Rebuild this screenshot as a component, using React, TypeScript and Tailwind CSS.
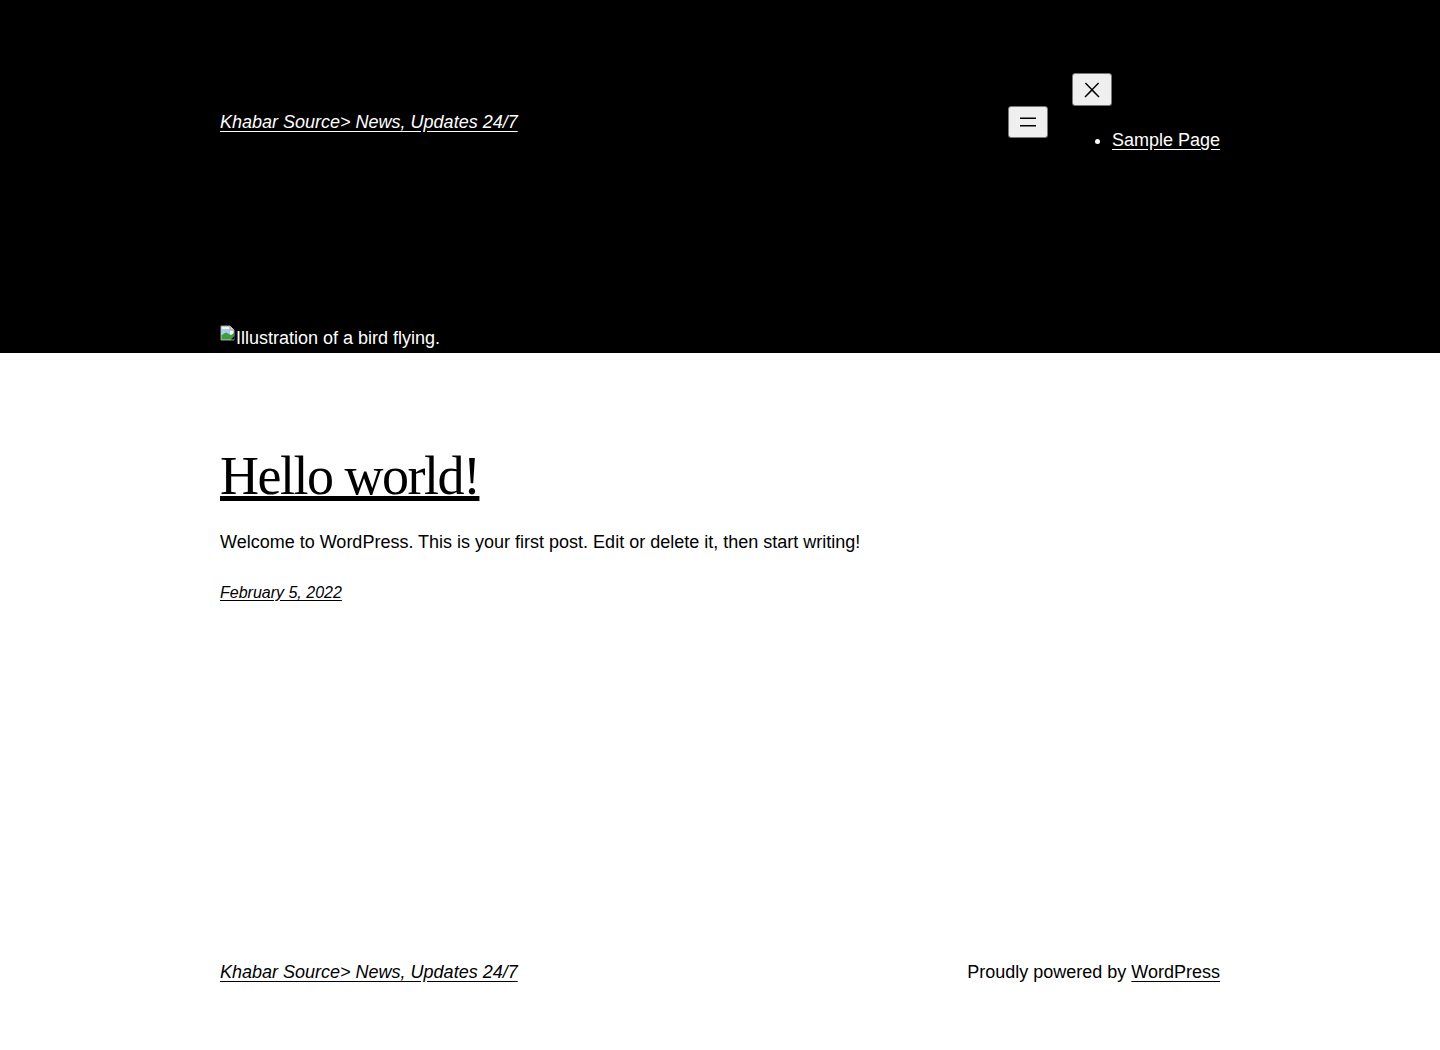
import React from "react";

function BrokenImage() {
  return (
    <svg width="16" height="16" viewBox="0 0 16 16" className="shrink-0">
      <path d="M1 1h9l4 4v10H1z" fill="#f4f4f4" stroke="#9a9a9a" strokeWidth="1" />
      <path d="M10 1v4h4" fill="#dcdcdc" stroke="#9a9a9a" strokeWidth="1" />
      <rect x="1.5" y="4" width="8.5" height="5" fill="#a9cdeb" />
      <path d="M1.5 13.5 L1.5 10 L6 7.5 L11 10 L14 8 V13 L12 14.5 H1.5z" fill="#3f9d3f" />
      <path d="M11 14.5 L14.5 11 V14.5z" fill="#000" />
    </svg>
  );
}

export default function App() {
  const sans = { fontFamily: '"Liberation Sans", Arial, sans-serif' };
  return (
    <div className="min-h-[1050px] bg-white text-black" style={sans}>
      <header className="bg-black text-white h-[353px] px-[220px] pt-[73px]">
        <div className="flex items-center justify-between">
          <a href="#" className="italic text-[18px] leading-[27px] underline underline-offset-[3px]">
            Khabar Source&gt; News, Updates 24/7
          </a>
          <div className="flex items-center gap-[24px]">
            <button className="w-[40px] h-[32px] bg-[#efefef] border border-[#767676] rounded-[3px] flex items-center justify-center">
              <svg width="24" height="24" viewBox="0 0 24 24">
                <path d="M4 7.5h16V9H4z M4 15h16v1.5H4z" fill="#000" />
              </svg>
            </button>
            <div className="w-[148px] flex flex-col items-start">
              <button className="w-[40px] h-[33px] bg-[#efefef] border border-[#767676] rounded-[3px] flex items-center justify-center">
                <svg width="24" height="24" viewBox="0 0 24 24">
                  <path
                    d="M13 11.8l6.1-6.3-1-1-6.1 6.2-6.1-6.2-1 1 6.1 6.3-6.5 6.7 1 1 6.5-6.6 6.5 6.6 1-1z"
                    fill="#000"
                  />
                </svg>
              </button>
              <ul className="list-disc pl-[40px] mt-[21px] mb-[17px] text-[18px] leading-[27px] whitespace-nowrap">
                <li>
                  <a href="#" className="underline underline-offset-[3px]">Sample Page</a>
                </li>
              </ul>
            </div>
          </div>
        </div>
        <div className="mt-[154px] flex items-start h-[28px]">
          <BrokenImage />
          <span className="text-[18px] leading-[27px] text-white">Illustration of a bird flying.</span>
        </div>
      </header>

      <main className="px-[220px] pt-[93px]">
        <h2
          className="text-[54px] leading-[60px] tracking-[-1.5px] font-normal"
          style={{ fontFamily: '"Liberation Serif", "Times New Roman", serif' }}
        >
          <a href="#" className="underline decoration-[5px] underline-offset-[2px]">Hello world!</a>
        </h2>
        <p className="mt-[23px] text-[18px] leading-[27px]">
          Welcome to WordPress. This is your first post. Edit or delete it, then start writing!
        </p>
        <div className="mt-[25px] text-[16px] leading-[24px] italic">
          <a href="#" className="underline underline-offset-[2px]">February 5, 2022</a>
        </div>
      </main>

      <footer className="px-[220px] mt-[354px] pb-[65px] flex items-center justify-between text-[18px] leading-[27px]">
        <a href="#" className="italic underline underline-offset-[3px]">Khabar Source&gt; News, Updates 24/7</a>
        <p>
          Proudly powered by <a href="#" className="underline underline-offset-[3px]">WordPress</a>
        </p>
      </footer>
    </div>
  );
}
